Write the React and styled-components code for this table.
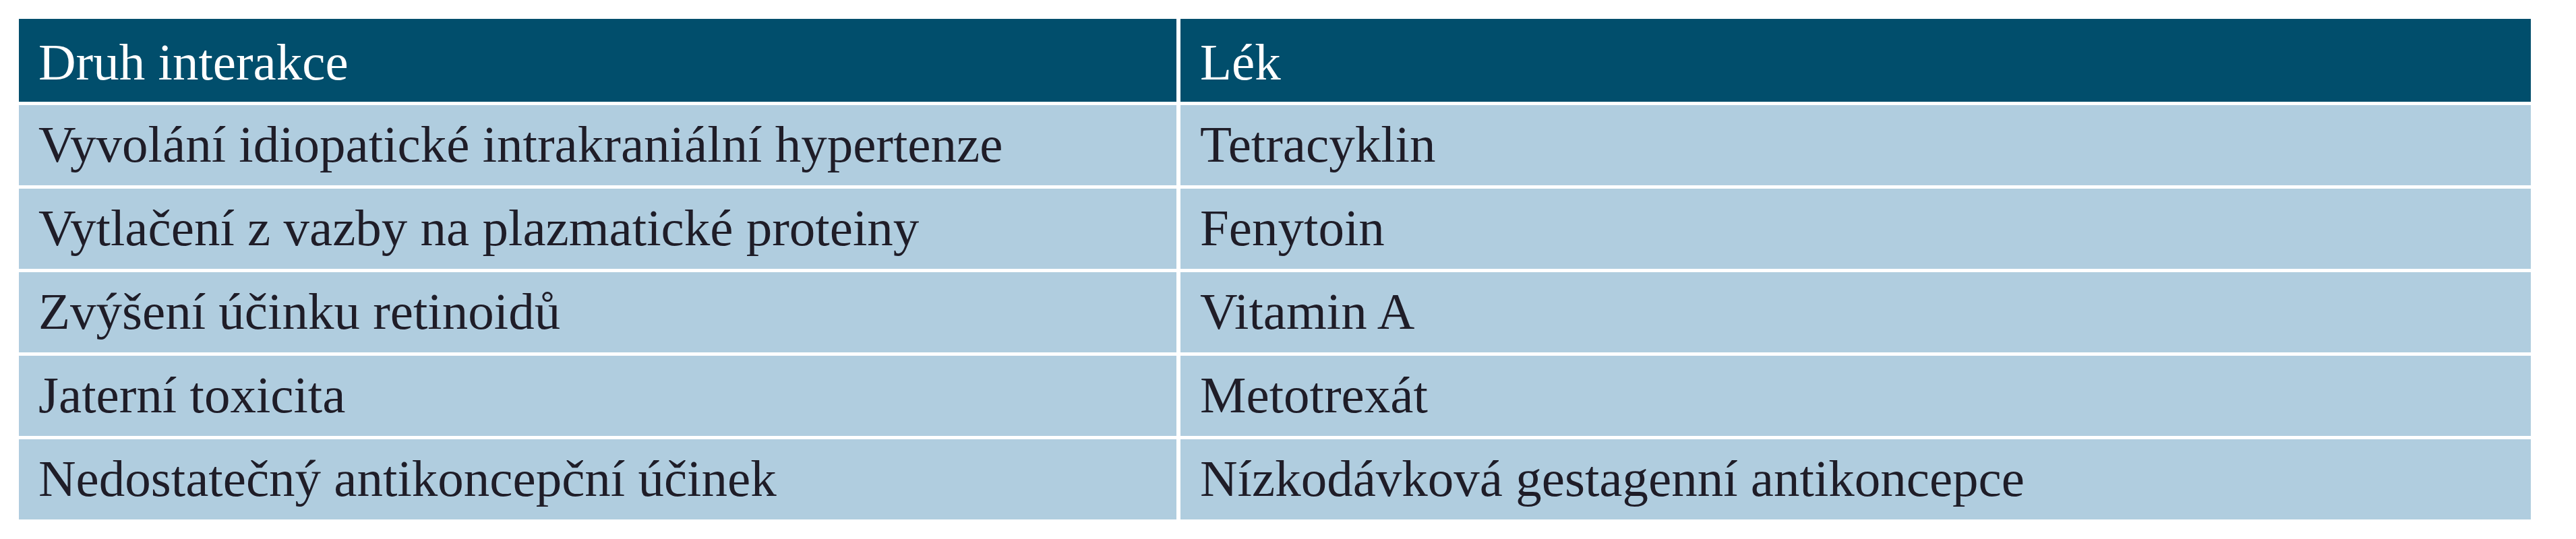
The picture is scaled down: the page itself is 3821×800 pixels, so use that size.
import React from "react";
import styled, { createGlobalStyle } from "styled-components";

const GlobalStyle = createGlobalStyle`
  html, body {
    margin: 0;
    padding: 0;
    background: #ffffff;
  }
  body {
    font-family: "Liberation Serif", "Times New Roman", serif;
  }
`;

const Page = styled.div`
  padding: 28px 0 0 28px;
  background: #ffffff;
  min-height: 800px;
  box-sizing: border-box;
`;

const Table = styled.div`
  display: grid;
  grid-template-columns: 1717px 2003px;
  grid-template-rows: 123px repeat(5, 119px);
  column-gap: 6px;
  row-gap: 5px;
  width: max-content;
`;

const Cell = styled.div`
  box-sizing: border-box;
  padding: ${(p) => (p.$head ? "20px 29px 0" : "14px 29px 0")};
  background: ${(p) => (p.$head ? "#014e6c" : "#b0cddf")};
  color: ${(p) => (p.$head ? "#ffffff" : "#1f1d28")};
  font-family: "Liberation Serif", "Times New Roman", serif;
  font-size: 77px;
  line-height: normal;
  white-space: nowrap;
  overflow: hidden;
`;

const rows = [
  ["Vyvolání idiopatické intrakraniální hypertenze", "Tetracyklin"],
  ["Vytlačení z vazby na plazmatické proteiny", "Fenytoin"],
  ["Zvýšení účinku retinoidů", "Vitamin A"],
  ["Jaterní toxicita", "Metotrexát"],
  ["Nedostatečný antikoncepční účinek", "Nízkodávková gestagenní antikoncepce"],
];

export default function App() {
  return (
    <>
      <GlobalStyle />
      <Page>
        <Table>
          <Cell $head>Druh interakce</Cell>
          <Cell $head>Lék</Cell>
          {rows.map(([a, b]) => (
            <React.Fragment key={a}>
              <Cell>{a}</Cell>
              <Cell>{b}</Cell>
            </React.Fragment>
          ))}
        </Table>
      </Page>
    </>
  );
}
